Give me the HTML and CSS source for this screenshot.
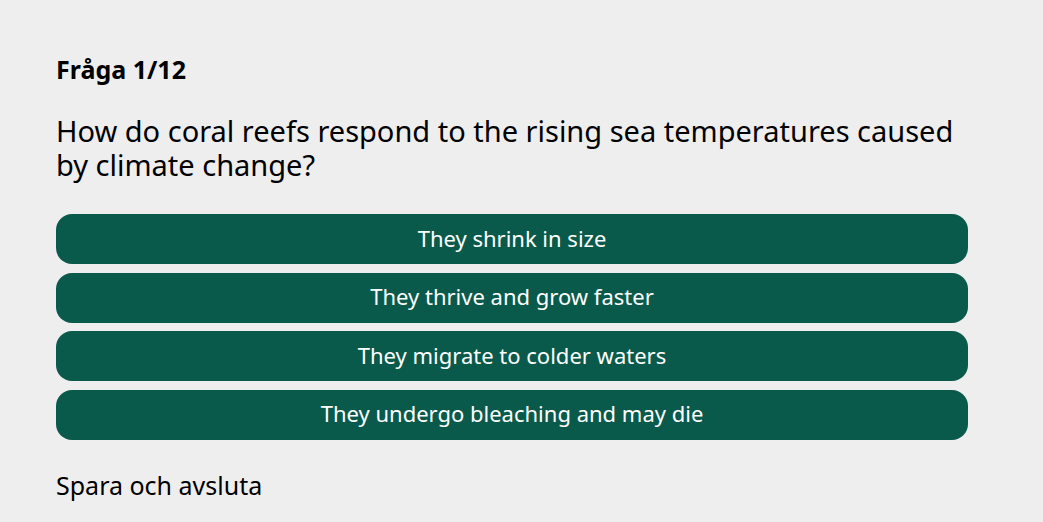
FILE: index.html
```html
<!DOCTYPE html>
<html lang="sv">
<head>
    <meta charset="UTF-8">
    <meta name="viewport" content="width=device-width, initial-scale=1.0">
    <title>Quiz</title>
    <link rel="stylesheet" href="styles.css">
</head>
<body>
    <main class="quiz">
        <h2 class="counter">Fråga 1/12</h2>
        <p class="question">How do coral reefs respond to the rising sea temperatures caused by climate change?</p>

        <div class="answers">
            <button class="answer">They shrink in size</button>
            <button class="answer">They thrive and grow faster</button>
            <button class="answer">They migrate to colder waters</button>
            <button class="answer">They undergo bleaching and may die</button>
        </div>

        <a class="quit" href="#">Spara och avsluta</a>
    </main>
</body>
</html>
```

FILE: styles.css
```css
body {
    margin: 0;
    padding: 0;
    background-color: #eeeeee;
    font-family: "Noto Sans", sans-serif;
    color: #000;
}
.quiz {
    width: 912px;
    padding: 52px 56px 0;
}
.counter {
    margin: 0;
    font-size: 25px;
    font-weight: bold;
    line-height: 34px;
}
.question {
    margin: 28px 0 0;
    font-size: 29px;
    line-height: 34px;
}
.answers {
    display: flex;
    flex-direction: column;
    gap: 8.5px;
    margin-top: 32px;
}
.answer {
    height: 50px;
    padding: 0 0 3px;
    background: #0a5a4b;
    color: white;
    font-family: "Noto Sans", sans-serif;
    font-size: 22px;
    border: none;
    border-radius: 16px;
    cursor: pointer;
}
.quit {
    display: block;
    margin-top: 28px;
    font-size: 25px;
    line-height: 34px;
    color: #000;
    text-decoration: none;
}
```
